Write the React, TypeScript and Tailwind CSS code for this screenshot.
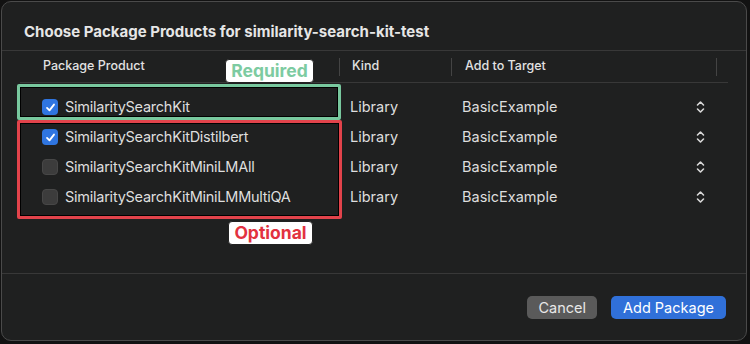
const rows = [
  { name: "SimilaritySearchKit", checked: true },
  { name: "SimilaritySearchKitDistilbert", checked: true },
  { name: "SimilaritySearchKitMiniLMAll", checked: false },
  { name: "SimilaritySearchKitMiniLMMultiQA", checked: false },
];

function Checkbox({ checked }: { checked: boolean }) {
  if (checked) {
    return (
      <div className="w-4 h-4 rounded-[4px] bg-[#2f75e0] flex items-center justify-center">
        <svg width="11" height="11" viewBox="0 0 12 12" fill="none">
          <path d="M2.2 6.4 L4.9 9.1 L9.8 2.8" stroke="white" strokeWidth="2" strokeLinecap="round" strokeLinejoin="round" />
        </svg>
      </div>
    );
  }
  return <div className="w-4 h-4 rounded-[4px] bg-[#3c3c3c] border border-[#474747]" />;
}

function Chevrons() {
  return (
    <svg width="9" height="14" viewBox="0 0 9 14" fill="none">
      <path d="M1.5 5 L4.5 2 L7.5 5" stroke="#d8d8d8" strokeWidth="1.6" strokeLinecap="round" strokeLinejoin="round" />
      <path d="M1.5 9 L4.5 12 L7.5 9" stroke="#d8d8d8" strokeWidth="1.6" strokeLinecap="round" strokeLinejoin="round" />
    </svg>
  );
}

export default function App() {
  return (
    <div className="w-[750px] h-[344px] bg-[#121212] pl-px pt-px" style={{ fontFamily: "Inter, 'Noto Sans', sans-serif" }}>
      <div className="relative w-[746px] h-[340px] rounded-[10px] border border-[#4a4a4a] bg-[#1f2020] flex flex-col">
        <div className="h-[49px] border-b border-[#383838] pl-[22px] pt-[20px]">
          <h1 className="text-[15px] leading-5 font-bold text-[#e6e6e6]">
            Choose Package Products for similarity-search-kit-test
          </h1>
        </div>

        <div className="ml-[18px] w-[708px] h-[222px]">
          <div className="h-[32px] border-b border-[#383838] flex items-center text-[12.5px] font-medium text-[#e2e2e2]">
            <div className="w-[319px] pl-[23px]">Package Product</div>
            <div className="w-px h-[18px] bg-[#444]" />
            <div className="w-[111px] pl-[12px]">Kind</div>
            <div className="w-px h-[18px] bg-[#444]" />
            <div className="w-[264px] pl-[13px]">Add to Target</div>
            <div className="w-px h-[18px] bg-[#444]" />
          </div>

          <div className="pt-[9px] flex flex-col">
            {rows.map((r) => (
              <div key={r.name} className="h-[30px] flex items-center text-[14.5px] text-[#dedede]">
                <div className="w-[320px] pl-[22px] flex items-center gap-[7px]">
                  <Checkbox checked={r.checked} />
                  <span className="tracking-[-0.25px]">{r.name}</span>
                </div>
                <div className="w-[112px] pl-[10px]">Library</div>
                <div className="w-[244px] pl-[10px]">BasicExample</div>
                <Chevrons />
              </div>
            ))}
          </div>
        </div>

        <div className="flex-1 border-t border-[#383838] flex justify-end items-start pt-[22px] pr-[20px] gap-[14px] text-[14.5px]">
          <button className="h-[23px] px-[11px] rounded-[5px] bg-[#5a5a5a] text-[#e8e8e8]">Cancel</button>
          <button className="h-[23px] px-[12px] rounded-[5px] bg-[#3070d9] text-white">Add Package</button>
        </div>

        <div className="absolute left-[15px] top-[82px] w-[324px] h-[36px] border-[3px] border-[#78c89e] rounded-[2px] shadow-[inset_0_0_0_1px_#000]" />
        <div className="absolute left-[15px] top-[118px] w-[325px] h-[99px] border-[3px] border-[#e2434b] rounded-[2px] shadow-[inset_0_0_0_1px_#000]" />

        <div className="absolute left-[223px] top-[57px] w-[89px] h-[24px] rounded-[4px] bg-white border border-[#222] flex items-center justify-center text-[17.5px] font-bold text-[#7dcba1]">
          Required
        </div>
        <div className="absolute left-[226px] top-[219px] w-[85px] h-[24px] rounded-[4px] bg-white border border-[#222] flex items-center justify-center text-[17.5px] font-bold text-[#e2323f]">
          Optional
        </div>
      </div>
    </div>
  );
}
